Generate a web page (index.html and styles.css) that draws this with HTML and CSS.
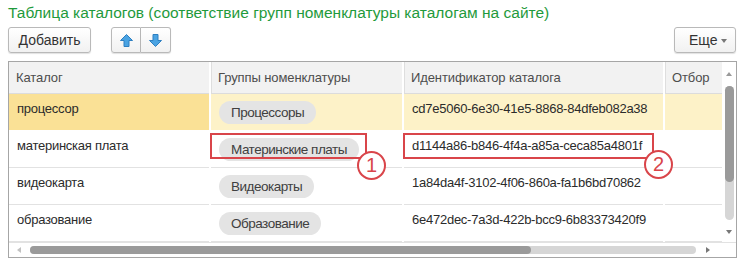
FILE: index.html
```html
<!DOCTYPE html>
<html lang="ru">

<head>
    <meta charset="UTF-8">
    <title>Таблица каталогов</title>
    <link rel="stylesheet" href="styles.css">
</head>

<body>
    <div class="page">
        <h1 class="title">Таблица каталогов (соответствие групп номенклатуры каталогам на сайте)</h1>

        <div class="toolbar">
            <button class="btn btn-add">Добавить</button>
            <div class="btn-group">
                <button class="btn btn-icon" title="Вверх">
                    <svg width="13" height="13" viewBox="0 0 13 13">
                        <polygon points="6.5,0.5 12.5,6.5 9,6.5 9,12.5 4,12.5 4,6.5 0.5,6.5" fill="#4aa3e2" stroke="#2d7fc1" stroke-width="1" stroke-linejoin="round"/>
                    </svg>
                </button>
                <button class="btn btn-icon" title="Вниз">
                    <svg width="13" height="13" viewBox="0 0 13 13">
                        <polygon points="6.5,12.5 12.5,6.5 9,6.5 9,0.5 4,0.5 4,6.5 0.5,6.5" fill="#4aa3e2" stroke="#2d7fc1" stroke-width="1" stroke-linejoin="round"/>
                    </svg>
                </button>
            </div>
            <button class="btn btn-more">Еще <span class="caret"></span></button>
        </div>

        <div class="grid">
            <div class="grid-body">
                <table class="catalogs">
                    <colgroup>
                        <col class="col-catalog">
                        <col class="col-groups">
                        <col class="col-id">
                        <col class="col-filter">
                    </colgroup>
                    <thead>
                        <tr>
                            <th>Каталог</th>
                            <th>Группы номенклатуры</th>
                            <th>Идентификатор каталога</th>
                            <th>Отбор</th>
                        </tr>
                    </thead>
                    <tbody>
                        <tr class="selected">
                            <td class="current">процессор</td>
                            <td><span class="pill">Процессоры</span></td>
                            <td>cd7e5060-6e30-41e5-8868-84dfeb082a38</td>
                            <td></td>
                        </tr>
                        <tr>
                            <td>материнская плата</td>
                            <td><span class="pill">Материнские платы</span></td>
                            <td>d1144a86-b846-4f4a-a85a-ceca85a4801f</td>
                            <td></td>
                        </tr>
                        <tr>
                            <td>видеокарта</td>
                            <td><span class="pill">Видеокарты</span></td>
                            <td>1a84da4f-3102-4f06-860a-fa1b6bd70862</td>
                            <td></td>
                        </tr>
                        <tr>
                            <td>образование</td>
                            <td><span class="pill">Образование</span></td>
                            <td>6e472dec-7a3d-422b-bcc9-6b83373420f9</td>
                            <td></td>
                        </tr>
                    </tbody>
                </table>
                <div class="vscroll">
                    <span class="arrow arrow-up"></span>
                    <div class="vtrack"><div class="vthumb"></div></div>
                    <span class="arrow arrow-down"></span>
                </div>
            </div>
            <div class="hscroll">
                <span class="arrow arrow-left"></span>
                <div class="htrack"><div class="hthumb"></div></div>
                <span class="arrow arrow-right"></span>
            </div>

            <!-- annotations -->
            <div class="mark mark-groups"></div>
            <div class="mark mark-id"></div>
            <span class="badge badge-1">1</span>
            <span class="badge badge-2">2</span>
        </div>
    </div>
</body>

</html>
```

FILE: styles.css
```css
* {
    margin: 0;
    padding: 0;
    box-sizing: border-box;
}

body {
    background: #fff;
    font-family: "Liberation Sans", Arial, sans-serif;
    color: #333;
}

.page {
    padding: 4px 7px 0 8px;
}

.title {
    font-size: 15.5px;
    font-weight: normal;
    line-height: 18px;
    color: #1f9a3c;
}

/* toolbar */

.toolbar {
    display: flex;
    align-items: center;
    margin-top: 5px;
    height: 26px;
}

.btn {
    font-family: inherit;
    font-size: 14px;
    color: #333;
    height: 26px;
    border: 1px solid #b9b9b9;
    border-radius: 3px;
    background: linear-gradient(#ffffff, #f1f1f1);
    box-shadow: 0 1px 1px rgba(0, 0, 0, 0.12);
    cursor: pointer;
}

.btn-add {
    width: 83px;
}

.btn-group {
    display: flex;
    margin-left: 20px;
}

.btn-icon {
    width: 30px;
    display: flex;
    align-items: center;
    justify-content: center;
}

.btn-group .btn-icon:first-child {
    border-radius: 3px 0 0 3px;
}

.btn-group .btn-icon:last-child {
    border-left: none;
    border-radius: 0 3px 3px 0;
}

.btn-more {
    margin-left: auto;
    width: 62px;
    padding-left: 14px;
    text-align: left;
    position: relative;
}

.caret {
    position: absolute;
    right: 8px;
    top: 11px;
    border-left: 3px solid transparent;
    border-right: 3px solid transparent;
    border-top: 4px solid #777;
}

/* grid */

.grid {
    position: relative;
    margin-top: 8px;
    width: 729px;
    border: 1px solid #a6a6a6;
}

.grid-body {
    display: flex;
}

.catalogs {
    width: 713px;
    table-layout: fixed;
    border-collapse: collapse;
    font-size: 13px;
}

.col-catalog { width: 201px; }
.col-groups { width: 193px; }
.col-id { width: 261px; }
.col-filter { width: 58px; }

.catalogs th {
    height: 31px;
    background: #f2f2f2;
    color: #4d4d4d;
    font-weight: normal;
    text-align: left;
    padding: 0 7px;
    letter-spacing: -0.1px;
    border-left: 2px solid #fff;
    border-bottom: 1px solid #dcdcdc;
    box-shadow: inset 1px 0 0 #dedede;
    white-space: nowrap;
    overflow: hidden;
}

.catalogs th:first-child {
    border-left: none;
    box-shadow: none;
}

.catalogs td {
    height: 37px;
    vertical-align: top;
    padding: 7px 7px 0 8px;
    line-height: 16px;
    letter-spacing: -0.25px;
    color: #2b2b2b;
    border-bottom: 1px solid #e2e2e2;
    border-left: 2px solid transparent;
    white-space: nowrap;
    overflow: hidden;
}

.catalogs td:first-child {
    border-left: none;
}

.catalogs tr.selected td {
    background: #fdf2c8;
    border-left-color: #fff;
    border-bottom-color: #fff;
}

.catalogs tr.selected td.current {
    background: #fae196;
}

.pill {
    display: inline-block;
    height: 23px;
    line-height: 24px;
    padding: 0 12px;
    border-radius: 12px;
    background: #e4e4e4;
    color: #404040;
    font-size: 13.5px;
    letter-spacing: -0.5px;
}

/* scrollbars */

.vscroll {
    width: 14px;
    display: flex;
    flex-direction: column;
    align-items: center;
    padding: 10px 0 8px;
}

.vtrack {
    flex: 1;
    width: 9px;
    margin: 10px 0 10px;
    border-radius: 5px;
    background: #d6d6d6;
}

.vthumb {
    height: 96px;
    border-radius: 5px;
    background: #9a9a9a;
}

.hscroll {
    display: flex;
    align-items: center;
    height: 15px;
    padding: 0 0 0 8px;
    border-top: 1px solid #e2e2e2;
}

.htrack {
    width: 666px;
    height: 8px;
    margin: 0 10px 0 9px;
    border-radius: 4px;
    background: #d6d6d6;
}

.hthumb {
    width: 501px;
    height: 8px;
    border-radius: 4px;
    background: #9a9a9a;
}

.arrow {
    width: 0;
    height: 0;
    border: 3px solid transparent;
}

.arrow-up { border-bottom: 4px solid #9a9a9a; border-top: none; }
.arrow-down { border-top: 4px solid #777; border-bottom: none; }
.arrow-left { border-right: 4px solid #c2c2c2; border-left: none; }
.arrow-right { border-left: 4px solid #777; border-right: none; }

/* annotations */

.mark {
    position: absolute;
    border: 2px solid #d9454a;
}

.mark-groups {
    left: 201px;
    top: 71px;
    width: 157px;
    height: 26px;
}

.mark-id {
    left: 394px;
    top: 71px;
    width: 251px;
    height: 26px;
}

.badge {
    position: absolute;
    width: 29px;
    height: 29px;
    border: 2px solid #d9454a;
    border-radius: 50%;
    background: #fff;
    color: #d9454a;
    font-size: 20px;
    line-height: 25px;
    text-align: center;
}

.badge-1 {
    left: 348px;
    top: 89px;
}

.badge-2 {
    left: 635px;
    top: 88px;
}
```
